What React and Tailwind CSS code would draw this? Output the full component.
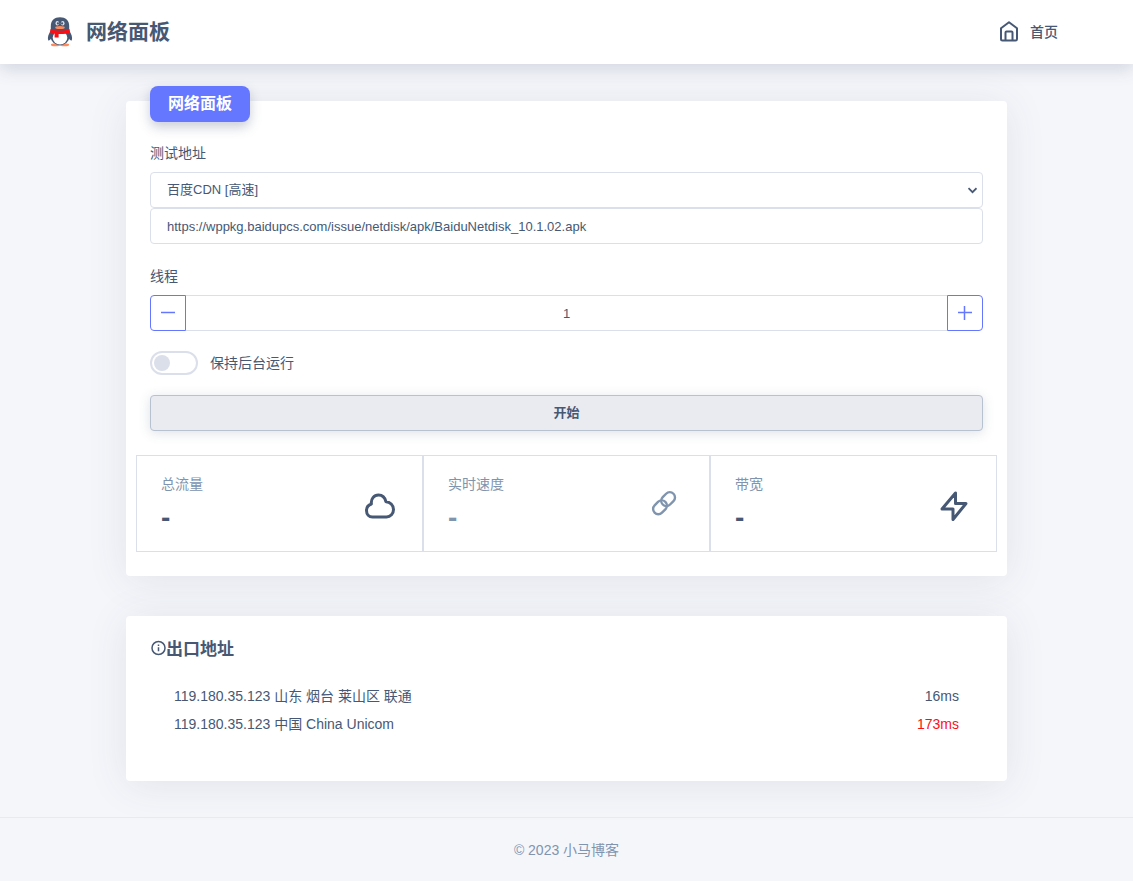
import { useState } from "react";

function Penguin() {
  return (
    <svg className="h-8 w-8" viewBox="0 0 32 32" aria-hidden="true">
      <ellipse cx="11.500" cy="28.800" rx="4.600" ry="1.500" fill="#ff8a5c" />
      <ellipse cx="20.500" cy="28.800" rx="4.600" ry="1.500" fill="#ff8a5c" />
      <path d="M7 14C4.600 18 3.200 21.500 4.200 24.300C5.200 25 6.500 23.600 7 22.500L25 22.500C25.500 23.600 26.800 25 27.800 24.300C28.800 21.500 27.400 18 25 14Z" fill="#465874" />
      <ellipse cx="16" cy="21.200" rx="9.300" ry="8" fill="#465874" />
      <path d="M6.800 15V10C6.800 4 10.500 1.200 16 1.200S25.200 4 25.200 10V15Z" fill="#465874" />
      <ellipse cx="16" cy="21.700" rx="7.300" ry="6.800" fill="#fff" />
      <path d="M6.500 13C12 15 20 15 25.500 13L26 16.500C23 17.700 19 18.200 14.600 18V21.500H10.600V17.500C9 17.300 7.500 17 6 16.500Z" fill="#fb0f14" />
      <ellipse cx="16" cy="11.500" rx="4.800" ry="1.500" fill="#ff8a5c" />
      <ellipse cx="13.300" cy="7.200" rx="1.800" ry="2.300" fill="#dbdfea" />
      <ellipse cx="18.700" cy="7.200" rx="1.800" ry="2.300" fill="#dbdfea" />
      <circle cx="13.900" cy="7.400" r="1.100" fill="#465874" />
      <circle cx="18.100" cy="7.400" r="1.100" fill="#465874" />
    </svg>
  );
}

function HomeIcon() {
  return (
    <svg className="h-6 w-6" viewBox="0 0 24 24" fill="none" stroke="currentColor" strokeWidth="2" strokeLinejoin="round" aria-hidden="true">
      <path d="M3 8.300L11 2.300L19 8.300V19Q19 20.500 17.500 20.500H4.500Q3 20.500 3 19Z" />
      <path d="M7.500 20.500V12.500Q7.500 11.500 8.500 11.500H13.500Q14.500 11.500 14.500 12.500V20.500" />
    </svg>
  );
}

function CloudIcon() {
  return (
    <svg className="h-9 w-8" viewBox="0 -4 32 36" fill="none" stroke="currentColor" strokeWidth="3" strokeLinejoin="round" aria-hidden="true">
      <path d="M8.500 27H22.500C26.500 27 29.500 23.700 29.500 19.500C29.500 15.200 26 11.700 21.900 11.700C21 7.800 18.300 5 14.500 5C10 5 6.700 9 7.400 14C4.500 15 2.500 17.300 2.500 20.500C2.500 24.200 5 27 8.500 27Z" />
    </svg>
  );
}

function LinkIcon() {
  return (
    <svg className="h-8 w-8" viewBox="0 0 32 32" fill="none" stroke="currentColor" strokeWidth="2.400" aria-hidden="true">
      <rect x="9.500" y="5.900" width="15.200" height="10.400" rx="5.200" transform="rotate(-45 17.100 11.100)" />
      <rect x="1.400" y="14.100" width="15.200" height="10.400" rx="5.200" transform="rotate(-45 9 19.300)" />
    </svg>
  );
}

function BoltIcon() {
  return (
    <svg className="h-9 w-8" viewBox="0 -4 32 36" fill="none" stroke="currentColor" strokeWidth="3" strokeLinejoin="round" aria-hidden="true">
      <path d="M17.500 3V13.500H28L15 29.500V19H4Z" />
    </svg>
  );
}

function InfoIcon() {
  return (
    <svg className="mb-1 h-4 w-4" viewBox="0 0 16 16" fill="none" stroke="currentColor" aria-hidden="true">
      <circle cx="8.500" cy="8" r="6.500" strokeWidth="1.500" />
      <path d="M8.500 7.200V11.300M8.500 4.500V6" strokeWidth="1.500" />
    </svg>
  );
}

const stats = [
  { label: "总流量", Icon: CloudIcon, tone: "text-[#465874]" },
  { label: "实时速度", Icon: LinkIcon, tone: "text-[#8094ae]" },
  { label: "带宽", Icon: BoltIcon, tone: "text-[#465874]" },
];

const addresses = [
  { text: "119.180.35.123 山东 烟台 莱山区 联通", ping: "16ms", tone: "" },
  { text: "119.180.35.123 中国 China Unicom", ping: "173ms", tone: "text-[#fb0f14]" },
];

const field = "block h-9 w-full rounded border border-[#dbdfea] bg-white px-4 text-[13px] outline-none";
const stepper = "flex h-9 w-9 shrink-0 items-center justify-center border border-[#6576ff] text-[#6576ff]";
const card = "rounded bg-white shadow-[0_4px_40px_rgba(60,70,110,0.1)]";

export default function App() {
  const [threads, setThreads] = useState(1);
  const [url, setUrl] = useState("https://wppkg.baidupcs.com/issue/netdisk/apk/BaiduNetdisk_10.1.02.apk");

  return (
    <div className="flex min-h-screen flex-col bg-[#f5f6fa] font-['Liberation_Sans','Noto_Sans_CJK_SC',sans-serif] text-sm text-[#465874]">
      <header className="relative flex h-16 shrink-0 items-center justify-between bg-white pr-[75px] pl-11 shadow-[0_5px_16px_rgba(60,75,115,0.19)]">
        <a href="#" className="flex items-center gap-2.5">
          <Penguin />
          <span className="text-[21px] font-bold">网络面板</span>
        </a>
        <nav>
          <a href="#" className="flex items-center gap-2 font-medium">
            <HomeIcon />
            <span>首页</span>
          </a>
        </nav>
      </header>

      <main className="mx-auto flex w-full max-w-[881px] grow flex-col gap-10 pt-[37px] pb-9">
        <section className={`${card} px-6 pb-6`}>
          <h1 className="relative -mt-[15px] flex h-9 w-[100px] items-center justify-center rounded-lg bg-[#6576ff] text-base font-bold text-white shadow-[0_5px_12px_rgba(60,75,115,0.28)]">
            网络面板
          </h1>

          <label htmlFor="source" className="mt-[21px] mb-[9px] block leading-5">测试地址</label>
          <div className="relative">
            <select id="source" className={`${field} appearance-none`}>
              <option>百度CDN [高速]</option>
            </select>
            <svg className="pointer-events-none absolute top-3.5 right-1.5 h-2 w-2.5" viewBox="0 0 10 8" fill="none" stroke="currentColor" strokeWidth="1.700" aria-hidden="true">
              <path d="M1.500 2.200L5.500 6.200L9.500 2.200" />
            </svg>
          </div>
          <input aria-label="测试地址" className={field} value={url} onChange={(e) => setUrl(e.target.value)} />

          <label htmlFor="threads" className="mt-[22px] mb-[9px] block leading-5">线程</label>
          <div className="flex">
            <button type="button" aria-label="减少" className={`${stepper} rounded-l`} onClick={() => setThreads(Math.max(1, threads - 1))}>
              <svg className="h-4 w-4" viewBox="0 0 16 16" stroke="currentColor" strokeWidth="1.500" aria-hidden="true"><path d="M1 7.500H15" /></svg>
            </button>
            <input id="threads" className="h-9 min-w-0 grow border-y border-[#dbdfea] text-center text-[13px] outline-none" value={threads} onChange={(e) => setThreads(Number(e.target.value) || 1)} />
            <button type="button" aria-label="增加" className={`${stepper} rounded-r`} onClick={() => setThreads(threads + 1)}>
              <svg className="h-4 w-4" viewBox="0 0 16 16" stroke="currentColor" strokeWidth="1.500" aria-hidden="true"><path d="M1 7.500H15M7.500 1V15" /></svg>
            </button>
          </div>

          <label className="mt-5 flex w-fit items-center gap-3">
            <input
              type="checkbox"
              className="h-6 w-12 appearance-none rounded-full border-2 border-[#dbdfea] bg-white p-0.5 before:block before:h-4 before:w-4 before:rounded-full before:bg-[#dbdfea] checked:border-[#6576ff] checked:before:translate-x-6 checked:before:bg-[#6576ff]"
            />
            <span>保持后台运行</span>
          </label>

          <button type="button" className="mt-5 block h-9 w-full rounded border border-[#b7c2d0] bg-[#e9ebf1] text-[13px] font-bold shadow-[0_2px_12px_rgba(60,75,115,0.17)]">
            开始
          </button>

          <div className="-mx-3.5 mt-6 grid grid-cols-3">
            {stats.map(({ label, Icon, tone }) => (
              <div key={label} className="flex h-[97px] items-center justify-between border border-[#dbdfea] px-6">
                <div>
                  <div className="leading-5 text-[#8094ae]">{label}</div>
                  <div className={`mt-2 text-[28px] leading-8 font-bold ${tone}`}>-</div>
                </div>
                <div className={`flex w-9 justify-center ${tone}`}><Icon /></div>
              </div>
            ))}
          </div>
        </section>

        <section className={`${card} h-[165px] px-6 pt-5`}>
          <h2 className="flex items-center text-[17px] leading-7 font-bold">
            <InfoIcon />
            出口地址
          </h2>
          <ul className="mt-[18px] px-6">
            {addresses.map(({ text, ping, tone }) => (
              <li key={ping} className="flex justify-between leading-7">
                <span>{text}</span>
                <span className={tone}>{ping}</span>
              </li>
            ))}
          </ul>
        </section>
      </main>

      <footer className="flex h-16 shrink-0 items-center justify-center border-t border-[#e8eaf0] text-[#8094ae]">
        © 2023 小马博客
      </footer>
    </div>
  );
}
